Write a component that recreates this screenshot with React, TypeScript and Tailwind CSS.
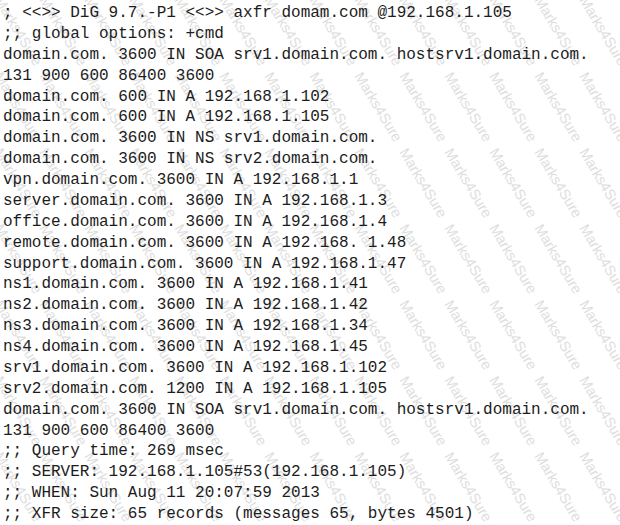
const lines = [
  "; <<>> DiG 9.7.-P1 <<>> axfr domam.com @192.168.1.105",
  ";; global options: +cmd",
  "domain.com. 3600 IN SOA srv1.domain.com. hostsrv1.domain.com.",
  "131 900 600 86400 3600",
  "domain.com. 600 IN A 192.168.1.102",
  "domain.com. 600 IN A 192.168.1.105",
  "domain.com. 3600 IN NS srv1.domain.com.",
  "domain.com. 3600 IN NS srv2.domain.com.",
  "vpn.domain.com. 3600 IN A 192.168.1.1",
  "server.domain.com. 3600 IN A 192.168.1.3",
  "office.domain.com. 3600 IN A 192.168.1.4",
  "remote.domain.com. 3600 IN A 192.168. 1.48",
  "support.domain.com. 3600 IN A 192.168.1.47",
  "ns1.domain.com. 3600 IN A 192.168.1.41",
  "ns2.domain.com. 3600 IN A 192.168.1.42",
  "ns3.domain.com. 3600 IN A 192.168.1.34",
  "ns4.domain.com. 3600 IN A 192.168.1.45",
  "srv1.domain.com. 3600 IN A 192.168.1.102",
  "srv2.domain.com. 1200 IN A 192.168.1.105",
  "domain.com. 3600 IN SOA srv1.domain.com. hostsrv1.domain.com.",
  "131 900 600 86400 3600",
  ";; Query time: 269 msec",
  ";; SERVER: 192.168.1.105#53(192.168.1.105)",
  ";; WHEN: Sun Aug 11 20:07:59 2013",
  ";; XFR size: 65 records (messages 65, bytes 4501)",
];

// watermark: "Marks4Sure" on a 45 x 76 lattice, tilted down to the right
const marks: { x: number; y: number }[] = [];
for (let j = -2; j <= 8; j++) {
  for (let i = -3; i <= 14; i++) {
    marks.push({ x: 39 + i * 45, y: j * 76 });
  }
}

function Watermark() {
  return (
    <svg className="absolute inset-0 w-full h-full pointer-events-none" xmlns="http://www.w3.org/2000/svg">
      {marks.map((m, k) => (
        <text
          key={k}
          transform={`translate(${m.x} ${m.y}) rotate(59)`}
          fontFamily="'Liberation Sans', Arial, sans-serif"
          fontSize="14.5"
          fill="#dedede"
        >
          Marks4Sure
        </text>
      ))}
    </svg>
  );
}

export default function App() {
  return (
    <div className="relative w-[620px] h-[525px] bg-white overflow-hidden">
      <Watermark />
      <div className="relative pt-[3px] pl-[3px] font-['Liberation_Mono','Courier_New',monospace] text-[16px] leading-[20.875px] text-[#1c1c1c] whitespace-pre">
        {lines.map((l, i) => (
          <div key={i}>{l}</div>
        ))}
      </div>
    </div>
  );
}
